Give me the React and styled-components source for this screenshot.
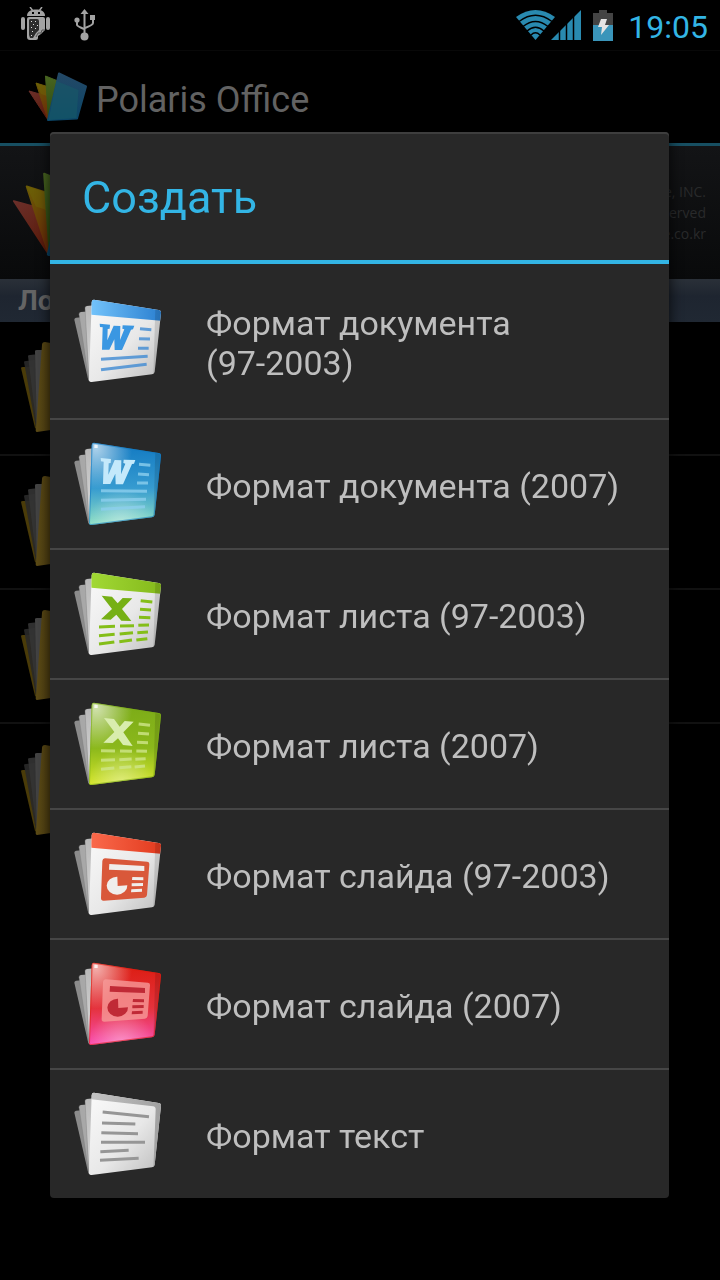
import styled, { createGlobalStyle } from "styled-components";

const GlobalStyle = createGlobalStyle`
  * {
    box-sizing: border-box;
  }
  body {
    margin: 0;
    background-color: #000;
    font-family: Roboto, "Noto Sans", sans-serif;
  }
`;

const Screen = styled.div`
  min-height: 100vh;
  background-color: #000;
`;

const StatusBar = styled.header`
  height: 51px;
  padding: 0 12px 0 20px;
  display: flex;
  justify-content: space-between;
  align-items: center;
  border-bottom: 1px solid #080808;
`;

const StatusGroup = styled.div`
  display: flex;
  align-items: center;
  gap: ${(props) => props.$gap}px;
`;

const Clock = styled.time`
  margin-left: 4px;
  padding-top: 4px;
  color: #33b5e5;
  font-size: 32px;
  line-height: 46px;
`;

const AppBar = styled.div`
  height: 95px;
  padding: 0 28px;
  display: flex;
  align-items: center;
  gap: 8px;
  border-bottom: 3px solid #174f62;
`;

const AppTitle = styled.h1`
  margin: 0;
  padding-top: 6px;
  color: #626262;
  font-size: 36px;
  font-weight: 400;
`;

const Banner = styled.section`
  height: 133px;
  padding: 0 14px 0 12px;
  display: flex;
  justify-content: space-between;
  align-items: center;
  background: linear-gradient(#131416, #090a0b);
`;

const Copyright = styled.p`
  margin: 0;
  color: #292a2b;
  font-family: "Open Sans", "Noto Sans", sans-serif;
  font-size: 14px;
  line-height: 21px;
  text-align: right;
`;

const SectionTitle = styled.h2`
  margin: 0;
  padding: 0 18px;
  background: linear-gradient(#2a3038, #1e2530 40%, #202833);
  color: #646464;
  font-size: 28px;
  font-weight: 700;
  line-height: 43px;
`;

const FolderRow = styled.li`
  height: 134px;
  padding: 0 20px;
  display: flex;
  align-items: center;
  border-bottom: 2px solid #111;
  &:last-child {
    border-bottom: none;
  }
`;

const PlainList = styled.ul`
  margin: 0;
  padding: 0;
  list-style: none;
`;

const Overlay = styled.div`
  position: fixed;
  inset: 50px 0 0;
  padding: 0 51px 0 50px;
  display: flex;
  align-items: center;
`;

const Dialog = styled.section`
  width: 100%;
  background-color: #282828;
  border-radius: 4px;
  box-shadow: inset 0 2px 0 #3e3e3e, 0 4px 14px rgba(0, 0, 0, 0.8);
`;

const DialogTitle = styled.h2`
  margin: 0;
  padding: 4px 32px 0;
  border-bottom: 4px solid #33b5e5;
  color: #33b5e5;
  font-size: 45px;
  font-weight: 400;
  line-height: 124px;
`;

const FormatItem = styled.li`
  border-bottom: 2px solid #464646;
  &:last-child {
    border-bottom: none;
  }
`;

const FormatButton = styled.button`
  width: 100%;
  min-height: ${(props) => (props.$tall ? 154 : 128)}px;
  padding: 0 32px 0 20px;
  display: flex;
  align-items: center;
  gap: 40px;
  border: none;
  background: none;
  color: #bebebe;
  font-family: inherit;
  font-size: 34px;
  line-height: 40px;
  text-align: left;
  white-space: pre-line;
  cursor: pointer;
  &:active {
    background-color: #33b5e5;
  }
`;

const FormatLabel = styled.span`
  padding-top: 4px;
`;

const IconSvg = styled.svg`
  flex: none;
  display: block;
`;

function AndroidIcon() {
  return (
    <IconSvg width="32" height="36" viewBox="0 0 32 36" fill="#a3a3a3">
      <path d="M7 9C7 5 10 2.500 16 2.500s9 2.500 9 6.500z" />
      <path d="M10 0l3 4M22 0l-3 4" stroke="#a3a3a3" strokeWidth="1.500" />
      <path d="M12 5h2v2h-2zM18 5h2v2h-2z" fill="#000" />
      <rect x="1" y="10" width="4" height="13" rx="2" />
      <rect x="26" y="10" width="4" height="13" rx="2" />
      <path d="M9 10h14q2 0 2 2v11l-4 4-3 2v2q0 2-2 2h-6q-3 0-3-3V12q0-2 2-2z" />
      <path d="M10 12h7q2 0 2 2v9l-3 3-3 5h-3l-1-3V13z" fill="#2c2c2c" />
      <path
        d="M11 14h1v1h-1zM15 14h1v1h-1zM13 17h1v1h-1zM17 18h1v1h-1zM11 20h1v1h-1zM15 21h1v1h-1zM12 24h1v1h-1zM11 28h1v1h-1z"
        fill="#ddd"
      />
      <path d="M25 23l-3 0-1 3-3 0-2 4" fill="none" stroke="#555" />
    </IconSvg>
  );
}

function UsbIcon() {
  return (
    <IconSvg width="22" height="34" viewBox="0 0 22 34" fill="#a3a3a3">
      <path d="M10.500 1l4 5h-8zM9.500 5h2v23h-2z" />
      <circle cx="10.500" cy="28.500" r="4" />
      <circle cx="3" cy="12" r="2.600" />
      <path d="M16 7h5v5h-5z" />
      <path d="M3 13v4q0 1 7 4M19 11v4q0 2-8 5" fill="none" stroke="#a3a3a3" strokeWidth="2" />
    </IconSvg>
  );
}

function SignalIcons() {
  return (
    <IconSvg width="66" height="32" viewBox="0 0 66 32" fill="#298ab0">
      <path d="M0 8Q19.500-6 39 8L19.500 31z" />
      <g fill="none" stroke="#000" strokeWidth="1.500">
        <path d="M3 12.500Q19.500 0 36 12.500" />
        <path d="M7 17.500Q19.500 7.500 32 17.500" />
        <path d="M11 22Q19.500 14.500 28 22" />
        <path d="M15 26Q19.500 21.500 24 26" />
      </g>
      <path d="M35 31L65 1v30z" />
      <path d="M43.500 0v32M50.500 0v32M57.500 0v32" stroke="#000" strokeWidth="1.500" />
    </IconSvg>
  );
}

function BatteryIcon() {
  return (
    <IconSvg width="20" height="31" viewBox="0 0 20 31">
      <path d="M0 3h6V0h8v3h6v12H0z" fill="#444" />
      <path d="M0 15h20v16H0z" fill="#3a95ba" />
      <path d="M8 9h6l-2 6h4L8 25l1-8H5z" fill="#e4e4e4" />
    </IconSvg>
  );
}

function PolarisLogo({ width, height, id }) {
  return (
    <IconSvg width={width} height={height} viewBox="0 0 60 51">
      <defs>
        <linearGradient id={`${id}Red`} x2="0.500" y2="1">
          <stop offset="0" stopColor="#6b2f2a" />
          <stop offset="1" stopColor="#5c1c0c" />
        </linearGradient>
        <linearGradient id={`${id}Yellow`} x2="0.300" y2="1">
          <stop offset="0" stopColor="#6a5a06" />
          <stop offset="1" stopColor="#6a2c08" />
        </linearGradient>
        <linearGradient id={`${id}Green`} x2="0" y2="1">
          <stop offset="0" stopColor="#486420" />
          <stop offset="1" stopColor="#2a4a10" />
        </linearGradient>
        <linearGradient id={`${id}Blue`} x2="0" y2="1">
          <stop offset="0" stopColor="#234866" />
          <stop offset="1" stopColor="#0b4668" />
        </linearGradient>
      </defs>
      <g strokeLinejoin="round" strokeWidth="1">
        <path d="M1 19l18 5 1 24z" fill={`url(#${id}Red)`} stroke={`url(#${id}Red)`} />
        <path d="M8 11l16 5-4 32z" fill={`url(#${id}Yellow)`} stroke={`url(#${id}Yellow)`} />
        <path d="M8 11l10 3 1 10-6-2z" fill="#6e6808" opacity="0.400" />
        <path d="M17.500 4l15 6-12 38z" fill={`url(#${id}Green)`} stroke={`url(#${id}Green)`} />
        <path d="M31 1.500l27 13-9 32-29 1.500z" fill={`url(#${id}Blue)`} stroke={`url(#${id}Blue)`} strokeWidth="2" />
        <path d="M28.500 9l22 9-2 28-28 2z" fill="#185a68" opacity="0.600" />
      </g>
    </IconSvg>
  );
}

function FolderIcon() {
  return (
    <IconSvg width="92" height="92" viewBox="0 0 92 92">
      <defs>
        <linearGradient id="folderFront">
          <stop offset="0" stopColor="#5c4b16" />
          <stop offset="0.300" stopColor="#4f3e10" />
        </linearGradient>
      </defs>
      <path d="M1 26q0-1 2-1h10l6 64-4-3z" fill="#4a3b08" />
      <path d="M4 20q0-1 2-1l9-1 4 70-3-2z" fill="#292929" opacity="0.900" />
      <path d="M8 14q0-1 2-1l9-1v76h-2z" fill="#343434" opacity="0.900" />
      <path d="M15 9q0-1 2-1h8v78l-8 2z" fill="#434343" />
      <path d="M25 0l62 11-8 70-62 9q-2 0-1-4l6-83q0-3 3-3z" fill="url(#folderFront)" />
    </IconSvg>
  );
}

const themes = {
  doc: { top: "#74c4fb", bar: "#2a7fd0", ink: "#3f8bd4", glyph: "#3a97e2" },
  docx: { top: "#1279c2", middle: "#369bd0", bottom: "#8fe0c4", ink: "#8ccfee", glyph: "#c4e9fb" },
  xls: { top: "#a2d935", bar: "#84b91b", ink: "#84be18", glyph: "#76b015" },
  xlsx: { top: "#7bab18", middle: "#8bb81b", bottom: "#d5e62b", ink: "#cfe68a", glyph: "#d9edae" },
  ppt: { top: "#fa6a4c", bar: "#e23a1e", ink: "#d9502f", glyph: "#d9583a" },
  pptx: { top: "#dc1c10", middle: "#e4323c", bottom: "#fb4fb4", ink: "#c02a36", glyph: "#f69a98" },
  txt: { top: "#c4c4c4", ink: "#969696" },
};

function Glyph({ kind, theme }) {
  if (kind.startsWith("doc")) {
    return (
      <g>
        <path
          d="M119 110l31 3-1 12-6 1-1 34 19-44 20 1-1 42 13-32-6-2 1-10 35 1-4 11-6 1-27 61h-22l-1-32-15 31h-22l2-67-8-1z"
          fill={theme.glyph}
          transform={kind === "docx" ? "translate(3 -26)" : undefined}
        />
        {kind === "doc" ? (
          <g stroke={theme.ink} strokeWidth="9" opacity="0.800">
            <path d="M240 125l34 3M237 155l33 1M234 184h32M123 217l140-9M123 248l137-16" />
          </g>
        ) : (
          <g stroke={theme.ink} strokeWidth="9" opacity="0.800">
            <path d="M237 103l34 3M234 132l33 2M231 159h33M123 182l138 2M123 211l135-3M123 238l132-8" />
          </g>
        )}
      </g>
    );
  }
  if (kind === "xls") {
    return (
      <g>
        <path d="M125 107l31 3 17 20 15-16 29 1-31 32 28 36-30-1-15-18-17 15-29-1 33-31z" fill={theme.glyph} />
        <path
          d="M242 122l35 4M240 148l33 2M237 172l34 1M117 201l48-2M180 198l42-1M235 196l32-1M117 227l47-4M179 222l40-4M232 218l32-2M117 252l46-6M178 245l38-5M229 240l33-4"
          stroke={theme.ink}
          strokeWidth="9"
        />
      </g>
    );
  }
  if (kind === "xlsx") {
    return (
      <g>
        <path d="M132 84l30 3 17 23 15-17 27 2-31 32 28 41-29-3-15-20-16 14-28-1 33-32z" fill={theme.glyph} />
        <path
          d="M236 102l34 4M234 130l33 2M231 157l33 1M123 182l42 1M180 183l36 1M229 183l32 1M123 211l42-2M178 209l37-2M226 208l31-2M123 238l40-4M178 233l36-3M224 231l31-3"
          stroke={theme.ink}
          strokeWidth="9"
          opacity="0.800"
        />
      </g>
    );
  }
  if (kind.startsWith("ppt")) {
    const detail = kind === "ppt" ? "#f0eeec" : theme.ink;
    return (
      <g fill={detail}>
        <path
          d="M136 115l126 10q7 1 6 8l-7 92q-1 7-8 8l-121 9q-9 1-9-8l4-111q1-9 9-8z"
          fill={theme.glyph}
          transform={kind === "pptx" ? "translate(2 -27)" : undefined}
          opacity={kind === "pptx" ? 0.8 : 1}
        />
        <g transform={kind === "pptx" ? "translate(2 -24)" : undefined}>
          <path d="M148 132l105 6v15l-106-4z" />
          <path d="M172 170l1 28 29-2a31 27 0 1 1-30-26z" />
          <path d="M217 171l33 1v9l-34-1zM215 190l34-1v9l-34 1zM214 208l32-2v9l-33 2z" />
        </g>
      </g>
    );
  }
  return (
    <path
      d="M128 96l139 14M126 129l100 3M124 158l110 3M123 187h132M121 215l85-4M120 241l116-6"
      stroke={theme.ink}
      strokeWidth="9"
    />
  );
}

function FormatIcon({ kind }) {
  const theme = themes[kind];
  const page = "M102 38l194 31q8 1 7 9l-19 176q-1 7-8 8l-181 23q-8 1-8-7l8-232q0-9 7-8z";
  const isColored = Boolean(theme.middle);

  return (
    <IconSvg width="96" height="96" viewBox="30 18 288 288" aria-hidden="true">
      <defs>
        <linearGradient id={`${kind}Page`} x1="0" y1="0" x2={isColored ? "0" : "1"} y2="1">
          <stop offset="0" stopColor={isColored ? theme.top : "#fafafa"} />
          <stop offset="0.550" stopColor={isColored ? theme.middle : "#e8e8e8"} />
          <stop offset="1" stopColor={isColored ? theme.bottom : "#bcbcbc"} />
        </linearGradient>
        <linearGradient id={`${kind}Bar`}>
          <stop offset="0" stopColor={theme.top} />
          <stop offset="1" stopColor={theme.bar || "#a0a0a0"} />
        </linearGradient>
        <linearGradient id={`${kind}Sheet`} x2="0" y2="1">
          <stop offset="0" stopColor="#b8b8b8" />
          <stop offset="1" stopColor="#ddd" />
        </linearGradient>
        <radialGradient id={`${kind}Shine`} cx="0.100" cy="0.060" r="0.500">
          <stop offset="0" stopColor="#fff" stopOpacity="0.650" />
          <stop offset="1" stopColor="#fff" stopOpacity="0" />
        </radialGradient>
        <radialGradient id={`${kind}Glow`} cx="0.450" cy="1" r="0.450">
          <stop offset="0" stopColor="#fff" stopOpacity="0.400" />
          <stop offset="1" stopColor="#fff" stopOpacity="0" />
        </radialGradient>
        <clipPath id={`${kind}Clip`}>
          <path d={page} />
        </clipPath>
      </defs>
      <path d="M48 92l50-4-4 196-9-4-42-182q0-5 5-6z" fill="#8c8c8c" />
      <path d="M62 75l40-3-6 212-9-3-30-199q0-6 5-7z" fill="#a8a8a8" />
      <path d="M80 57l30-3-14 230-8-3-13-218q0-5 5-6z" fill={`url(#${kind}Sheet)`} />
      <path d="M62 75l-5 5 29 199M80 57l-5 5 12 217" fill="none" stroke="#777" strokeWidth="1" />
      <path d={page} fill={`url(#${kind}Page)`} />
      <g clipPath={`url(#${kind}Clip)`}>
        {theme.bar && <path d="M90 30l216 30-4 41-208-18z" fill={`url(#${kind}Bar)`} />}
        {kind === "txt" && (
          <path d="M90 30l216 30-20 210-6 0 7-182q0-8-8-9L94 58z" fill={`url(#${kind}Bar)`} />
        )}
        {kind !== "txt" && <path d="M286 60h20l-20 205h-6z" fill="#000" opacity="0.120" />}
        {isColored && (
          <>
            <path d={page} fill={`url(#${kind}Shine)`} />
            <path d={page} fill={`url(#${kind}Glow)`} />
            <path d="M103 44h10v10h-10z" fill="#fff" opacity="0.800" />
            <path d={page} fill="none" stroke={theme.top} strokeWidth="6" opacity="0.600" />
          </>
        )}
      </g>
      <Glyph kind={kind} theme={theme} />
    </IconSvg>
  );
}

const formats = [
  { kind: "doc", label: "Формат документа\n(97-2003)", tall: true },
  { kind: "docx", label: "Формат документа (2007)" },
  { kind: "xls", label: "Формат листа (97-2003)" },
  { kind: "xlsx", label: "Формат листа (2007)" },
  { kind: "ppt", label: "Формат слайда (97-2003)" },
  { kind: "pptx", label: "Формат слайда (2007)" },
  { kind: "txt", label: "Формат текст" },
];

function App() {
  return (
    <Screen>
      <GlobalStyle />
      <StatusBar>
        <StatusGroup $gap={22}>
          <AndroidIcon />
          <UsbIcon />
        </StatusGroup>
        <StatusGroup $gap={11}>
          <SignalIcons />
          <BatteryIcon />
          <Clock>19:05</Clock>
        </StatusGroup>
      </StatusBar>
      <AppBar>
        <PolarisLogo id="small" width={60} height={51} />
        <AppTitle>Polaris Office</AppTitle>
      </AppBar>
      <Banner>
        <PolarisLogo id="large" width={110} height={94} />
        <Copyright>
          Infraware, INC.
          <br />
          All Rights Reserved
          <br />
          www.infraware.co.kr
        </Copyright>
      </Banner>
      <SectionTitle>Локальные</SectionTitle>
      <PlainList>
        {[1, 2, 3, 4].map((folder) => (
          <FolderRow key={folder}>
            <FolderIcon />
          </FolderRow>
        ))}
      </PlainList>
      <Overlay>
        <Dialog role="dialog" aria-labelledby="dialogTitle">
          <DialogTitle id="dialogTitle">Создать</DialogTitle>
          <PlainList>
            {formats.map(({ kind, label, tall }) => (
              <FormatItem key={kind}>
                <FormatButton type="button" $tall={tall}>
                  <FormatIcon kind={kind} />
                  <FormatLabel>{label}</FormatLabel>
                </FormatButton>
              </FormatItem>
            ))}
          </PlainList>
        </Dialog>
      </Overlay>
    </Screen>
  );
}

export default App;
